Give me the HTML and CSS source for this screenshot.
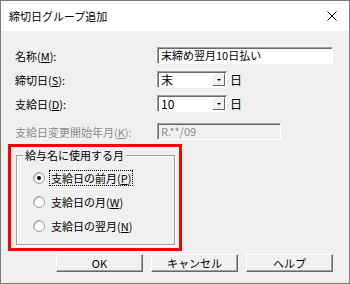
FILE: index.html
```html
<!DOCTYPE html>
<html lang="ja">
<head>
    <meta charset="UTF-8">
    <title>締切日グループ追加</title>
    <link rel="stylesheet" href="styles.css">
</head>
<body>
    <div class="dialog">
        <div class="titlebar">
            <span class="title">締切日グループ追加</span>
            <svg class="close" width="10" height="10" viewBox="0 0 10 10">
                <path d="M0.5 0.5 L9.5 9.5 M9.5 0.5 L0.5 9.5" stroke="#000" stroke-width="1"/>
            </svg>
        </div>
        <div class="content">
            <div class="fields">
                <div class="label">名称(<u>M</u>):</div>
                <div class="control"><div class="edit wide">末締め翌月10日払い</div></div>

                <div class="label">締切日(<u>S</u>):</div>
                <div class="control">
                    <div class="combo">末<span class="drop"></span></div>
                    <span class="unit">日</span>
                </div>

                <div class="label">支給日(<u>D</u>):</div>
                <div class="control">
                    <div class="combo">10<span class="drop"></span></div>
                    <span class="unit">日</span>
                </div>

                <div class="label disabled late">支給日変更開始年月(<u>K</u>):</div>
                <div class="control late"><div class="edit readonly">R.**/09</div></div>
            </div>

            <div class="highlight">
                <div class="group">
                    <span class="legend">給与名に使用する月</span>
                    <div class="radio-row">
                        <span class="radio checked"></span>
                        <span class="radio-text focused">支給日の前月(<u>P</u>)</span>
                    </div>
                    <div class="radio-row">
                        <span class="radio"></span>
                        <span class="radio-text">支給日の月(<u>W</u>)</span>
                    </div>
                    <div class="radio-row">
                        <span class="radio"></span>
                        <span class="radio-text">支給日の翌月(<u>N</u>)</span>
                    </div>
                </div>
            </div>

            <div class="buttons">
                <div class="btn default">OK</div>
                <div class="btn">キャンセル</div>
                <div class="btn">ヘルプ</div>
            </div>
        </div>
    </div>
</body>
</html>
```

FILE: styles.css
```css
* {
    box-sizing: border-box;
}

body {
    margin: 0;
    font-family: "Noto Sans CJK JP", "Noto Sans", sans-serif;
    font-size: 11px;
    color: #000;
}

.dialog {
    width: 350px;
    height: 284px;
    border: 1px solid #7a7a7a;
    background-color: #f0f0f0;
    display: flex;
    flex-direction: column;
}

.titlebar {
    height: 30px;
    background-color: #fff;
    display: flex;
    align-items: center;
    justify-content: space-between;
    padding: 0 12px 0 8px;
}

.title {
    font-size: 11px;
}

.content {
    padding: 16px 16px 0 7px;
}

.fields {
    display: grid;
    grid-template-columns: 142px auto;
    grid-auto-rows: 17px;
    row-gap: 7px;
    align-items: center;
    padding-left: 7px;
}

.late {
    margin-top: 8px;
}

.label.disabled {
    color: #8d8d8d;
}

.control {
    display: flex;
    align-items: center;
    height: 17px;
}

.edit {
    height: 17px;
    background-color: #fff;
    border-style: solid;
    border-width: 1px;
    border-color: #a0a0a0 #fff #fff #a0a0a0;
    box-shadow: inset 1px 1px 0 #696969;
    padding: 0 2px 0 3px;
    line-height: 15px;
    white-space: nowrap;
}

.edit.wide {
    width: 176px;
}

.edit.readonly {
    width: 124px;
    background-color: #f0f0f0;
    color: #8d8d8d;
}

.combo {
    position: relative;
    width: 70px;
    height: 17px;
    background-color: #fff;
    border-style: solid;
    border-width: 1px;
    border-color: #a0a0a0 #fff #fff #a0a0a0;
    box-shadow: inset 1px 1px 0 #696969;
    padding-left: 3px;
    line-height: 15px;
    font-size: 12px;
}

.drop {
    position: absolute;
    right: 1px;
    top: 1px;
    width: 13px;
    height: 13px;
    background-color: #f0f0f0;
    border-style: solid;
    border-width: 1px;
    border-color: #fff #696969 #696969 #fff;
}

.drop::after {
    content: "";
    position: absolute;
    left: 4px;
    top: 5px;
    border-left: 2px solid transparent;
    border-right: 2px solid transparent;
    border-top: 2px solid #000;
}

.unit {
    margin-left: 3px;
    font-size: 12px;
}

.highlight {
    margin-top: 8px;
    width: 174px;
    height: 107px;
    border: 3px solid #ff0000;
    padding: 8px 0 0 5px;
}

.group {
    position: relative;
    width: 159px;
    height: 90px;
    border: 1px solid #a0a0a0;
    box-shadow: 1px 1px 0 #fff, inset 1px 1px 0 #fff;
    padding: 14px 0 0 16px;
    display: flex;
    flex-direction: column;
    gap: 8px;
}

.legend {
    position: absolute;
    top: -9px;
    left: 6px;
    padding: 0 2px;
    background-color: #f0f0f0;
    line-height: 16px;
}

.radio-row {
    display: flex;
    align-items: center;
    height: 16px;
}

.radio {
    position: relative;
    width: 12px;
    height: 12px;
    border-radius: 50%;
    background-color: #fff;
    border: 1px solid #a0a0a0;
    box-shadow: inset 1px 1px 0 #c8c8c8;
    margin-right: 5px;
}

.radio.checked::after {
    content: "";
    position: absolute;
    left: 3px;
    top: 3px;
    width: 4px;
    height: 4px;
    border-radius: 50%;
    background-color: #000;
}

.radio-text {
    line-height: 14px;
    padding: 0 1px;
}

.radio-text.focused {
    outline: 1px dotted #000;
}

.buttons {
    margin-top: 3px;
    display: flex;
    justify-content: flex-end;
    gap: 8px;
    padding-right: 0;
}

.btn {
    width: 87px;
    height: 18px;
    background-color: #f0f0f0;
    border-style: solid;
    border-width: 1px;
    border-color: #fff #696969 #696969 #fff;
    box-shadow: inset -1px -1px 0 #a0a0a0;
    display: flex;
    align-items: center;
    justify-content: center;
}
```
